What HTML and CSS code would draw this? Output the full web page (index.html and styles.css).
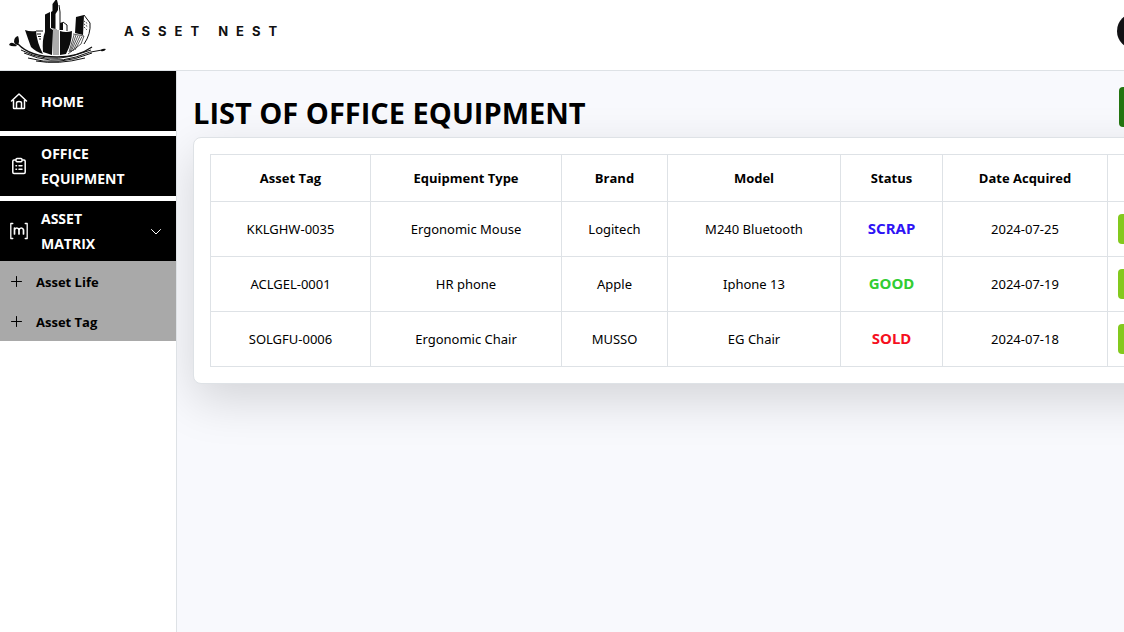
FILE: index.html
```html
<!DOCTYPE html>
<html lang="en">
<head>
<meta charset="utf-8">
<meta name="viewport" content="width=device-width, initial-scale=1">
<title>Asset Nest</title>
<link rel="stylesheet" href="styles.css">
</head>
<body>
<div class="shell">
  <header class="topbar">
    <div class="brand">
      <svg class="brand-mark" viewBox="0 0 120 70" aria-hidden="true">
        <g fill="#0c0c0c">
          <path d="M25 30Q30 32 36 31Q37 43 43 54Q36 52 31 47Q28 39 25 30Z"/>
          <path d="M45 14.500L50 12V28L53 30L52 55L43 52Q42 39 45 32Z"/>
          <path d="M52.500 4L55.500 0H57L58 4V10L55.500 14V29L51 28V12L52.500 11Z"/>
          <path d="M60 31Q66 33 72 31Q72 43 66 54L60 55Z"/>
          <path d="M60 23L63 22V30H60Z"/>
          <path d="M76 17L84 15L83 35L75 33Z"/>
          <path d="M9 45Q10 42 13 43Q16 44 17 46Q12 47 9 45Z"/>
          <path d="M14 42Q14 37 18 36Q20 41 18 45Q15 45 14 42Z"/>
          <path d="M101 50Q103 48 106 49Q104 52 101 51Z"/>
        </g>
        <g fill="none" stroke="#111" stroke-width="1">
          <path d="M36 31L43 31M37 34H41M38 36.500H41M39 39H41"/>
          <path d="M59 5L60 12V30M63 22L67 25V31"/>
          <path stroke-width=".7" d="M54 29V55M56 29V55M58 30V55"/>
          <path stroke-width=".7" d="M73 34L84 36L81 44L68 54M74 35L69 52M76 35L70 52M78 35.500L71 52M80 36L73 51M82 36.500L75 50"/>
          <path d="M84 15L90 23Q91 34 84 44"/>
          <path stroke-width=".8" stroke-dasharray="1.500 1" d="M84 21L88 24M84 24L88 27M84 27L87 30"/>
          <path stroke-width="1.300" d="M18 44Q30 57 57 57Q78 57 92 47"/>
          <path d="M21 50Q45 63 72 56L91 50M24 53Q51 65 76 57Q90 51 102 50M28 58Q58 67 92 53M36 61Q58 65 85 58"/>
        </g>
      </svg>
      <span class="brand-name">ASSET NEST</span>
    </div>
    <div class="profile"><button class="avatar" type="button" aria-label="Account"></button></div>
  </header>

  <div class="body">
    <nav class="sidebar">
      <a class="nav-item" href="#">
        <svg class="icon" viewBox="0 0 18 18" aria-hidden="true"><path d="M1.500 9L9 2L16.500 9M3.500 8V16Q3.500 16.500 4 16.500H14Q14.500 16.500 14.500 16V8M6.500 16.500V11Q6.500 9.500 9 9.500T11.500 11V16.500"/></svg>
        <span class="nav-label">HOME</span>
      </a>
      <a class="nav-item" href="#">
        <svg class="icon" viewBox="0 0 18 18" aria-hidden="true"><path d="M6 3H4Q2.800 3 2.800 4.200V15.300Q2.800 16.500 4 16.500H14Q15.200 16.500 15.200 15.300V4.200Q15.200 3 14 3H12M6 2.500Q6 1.500 7 1.500H11Q12 1.500 12 2.500V3.500Q12 4.800 11 4.800H7Q6 4.800 6 3.500ZM6 8.800H6.500M9 8.800H12M6 12.200H6.500M9 12.200H12"/></svg>
        <span class="nav-label">OFFICE EQUIPMENT</span>
      </a>
      <div class="nav-group">
        <button class="nav-item" type="button" aria-expanded="true">
          <svg class="icon" viewBox="0 0 18 18" aria-hidden="true"><path stroke-width="1.300" d="M2.800 1.500H.8V16.500H2.800M15.200 1.500H17.200V16.500H15.200"/><path stroke-width="1.700" d="M4.500 12V6M4.500 8Q5 6 6.800 6T9 8V12M9 8Q9.500 6 11.300 6T13.500 8V12"/></svg>
          <span class="nav-label">ASSET MATRIX</span>
          <svg class="chevron" viewBox="0 0 12 12" aria-hidden="true"><path d="M1.500 4.500L6 9L10.500 4.500"/></svg>
        </button>
        <a class="sub-item" href="#"><svg class="plus" viewBox="0 0 12 12" aria-hidden="true"><path d="M6.500 .5V10.500M1.500 5.500H11.500"/></svg>Asset Life</a>
        <a class="sub-item" href="#"><svg class="plus" viewBox="0 0 12 12" aria-hidden="true"><path d="M6.500 .5V10.500M1.500 5.500H11.500"/></svg>Asset Tag</a>
      </div>
    </nav>

    <main class="content">
      <div class="page-head">
        <h1>LIST OF OFFICE EQUIPMENT</h1>
        <button class="add" type="button" aria-label="Add equipment"></button>
      </div>
      <section class="card">
        <table>
          <colgroup><col class="c-tag"><col class="c-type"><col class="c-brand"><col class="c-model"><col class="c-status"><col class="c-date"><col></colgroup>
          <thead>
            <tr><th>Asset Tag</th><th>Equipment Type</th><th>Brand</th><th>Model</th><th>Status</th><th>Date Acquired</th><th></th></tr>
          </thead>
          <tbody>
            <tr><td>KKLGHW-0035</td><td>Ergonomic Mouse</td><td>Logitech</td><td>M240 Bluetooth</td><td class="status scrap">SCRAP</td><td>2024-07-25</td><td class="actions"><button class="action" type="button" aria-label="Edit KKLGHW-0035"></button></td></tr>
            <tr><td>ACLGEL-0001</td><td>HR phone</td><td>Apple</td><td>Iphone 13</td><td class="status good">GOOD</td><td>2024-07-19</td><td class="actions"><button class="action" type="button" aria-label="Edit ACLGEL-0001"></button></td></tr>
            <tr><td>SOLGFU-0006</td><td>Ergonomic Chair</td><td>MUSSO</td><td>EG Chair</td><td class="status sold">SOLD</td><td>2024-07-18</td><td class="actions"><button class="action" type="button" aria-label="Edit SOLGFU-0006"></button></td></tr>
          </tbody>
        </table>
      </section>
    </main>
  </div>
</div>
</body>
</html>
```
FILE: styles.css
```css
* { box-sizing: border-box; }

body {
  margin: 0;
  overflow-x: hidden;
  background: #f8f9fd;
  color: #000;
  font-family: "Segoe UI", "Open Sans", "Noto Sans", sans-serif;
  font-size: 13px;
}

button { border: 0; padding: 0; font: inherit; }
a { color: inherit; text-decoration: none; }

.shell {
  display: flex;
  flex-direction: column;
  width: calc(100% + 160px);
  min-height: 100vh;
}

.topbar {
  display: flex;
  justify-content: space-between;
  height: 71px;
  border-bottom: 1px solid #dee2e6;
  background: #fff;
}

.brand { display: flex; align-items: center; gap: 4px; }
.brand-mark { width: 120px; height: 70px; }
.brand-name {
  padding-bottom: 8px;
  color: #111;
  font: 700 13px/16px Inter, sans-serif;
  letter-spacing: 8px;
}

.profile { width: 167px; padding-top: 13px; }
.avatar { width: 36px; height: 36px; border-radius: 50%; background: #111114; }

.body { display: flex; flex: 1; }

.sidebar {
  position: relative;
  z-index: 1;
  display: flex;
  flex-direction: column;
  gap: 5px;
  width: 177px;
  border-right: 1px solid #dee2e6;
  background: #fff;
}

.nav-item {
  display: flex;
  align-items: center;
  gap: 13px;
  width: 100%;
  height: 60px;
  padding: 0 14px 0 10px;
  background: #000;
  color: #fff;
  font-size: 14px;
  font-weight: 700;
  line-height: 25px;
  text-align: left;
}

.nav-label { flex: 1; }
.icon { width: 18px; height: 18px; }
.chevron, .plus { width: 12px; height: 12px; }
.icon, .chevron, .plus {
  flex: none;
  fill: none;
  stroke: currentColor;
  stroke-linecap: round;
  stroke-linejoin: round;
}
.icon { stroke-width: 1.5; }

.sub-item {
  display: flex;
  align-items: center;
  gap: 14px;
  height: 40px;
  padding: 2px 10px 0;
  background: #a9a9a9;
  font-weight: 700;
}

.content { flex: 1; padding: 16px; }

.page-head {
  display: flex;
  align-items: center;
  justify-content: space-between;
  height: 40px;
  margin-bottom: 10px;
}

h1 { margin: 0; padding-top: 12px; font-size: 29px; line-height: 40px; }

.add { width: 149px; height: 40px; border-radius: 4px; background: #237410; }

.card {
  padding: 16px;
  border: 1px solid #dee2e6;
  border-radius: 8px;
  background: #fff;
  box-shadow: 0 16px 48px rgba(0, 0, 0, .15);
}

table { width: 100%; border-collapse: collapse; table-layout: fixed; }
th, td {
  height: 55px;
  padding: 0 10px;
  border: 1px solid #dee2e6;
  text-align: center;
}
th { height: 47px; }
td { font-family: "Segoe UI", "Noto Sans", "Open Sans", sans-serif; }

.c-tag { width: 160px; }
.c-type { width: 191px; }
.c-brand { width: 106px; }
.c-model { width: 173px; }
.c-status { width: 102px; }
.c-date { width: 165px; }

.status { padding-bottom: 2px; font-size: 15px; font-weight: 700; }
.scrap { color: #2e14f5; }
.good { color: #32cd32; }
.sold { color: #f5101e; }

.actions { text-align: left; }
.action {
  display: block;
  width: 60px;
  height: 30px;
  border-radius: 4px;
  background: #83c91e;
}
```
